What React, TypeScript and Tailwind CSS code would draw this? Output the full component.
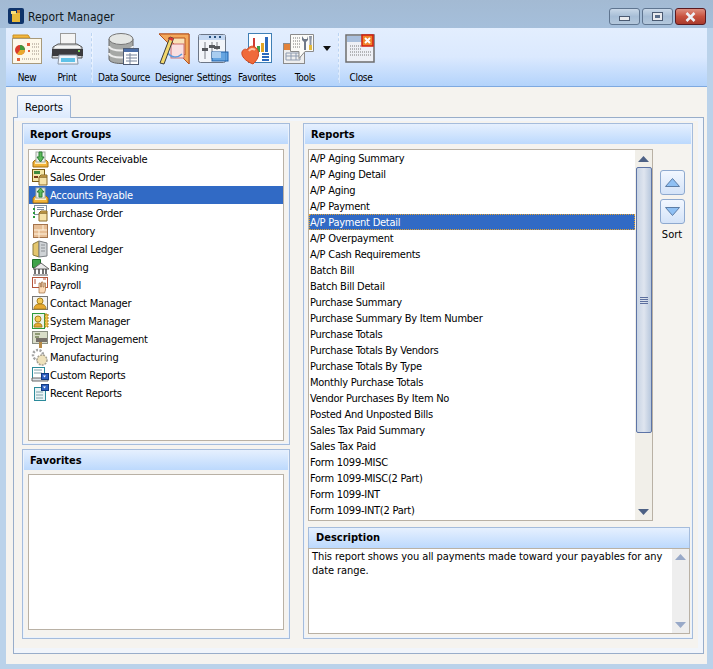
import type { ReactNode } from "react";

const font = { fontFamily: '"DejaVu Sans", Tahoma, sans-serif' };

const groups = [
  "Accounts Receivable",
  "Sales Order",
  "Accounts Payable",
  "Purchase Order",
  "Inventory",
  "General Ledger",
  "Banking",
  "Payroll",
  "Contact Manager",
  "System Manager",
  "Project Management",
  "Manufacturing",
  "Custom Reports",
  "Recent Reports",
];

const reports = [
  "A/P Aging Summary",
  "A/P Aging Detail",
  "A/P Aging",
  "A/P Payment",
  "A/P Payment Detail",
  "A/P Overpayment",
  "A/P Cash Requirements",
  "Batch Bill",
  "Batch Bill Detail",
  "Purchase Summary",
  "Purchase Summary By Item Number",
  "Purchase Totals",
  "Purchase Totals By Vendors",
  "Purchase Totals By Type",
  "Monthly Purchase Totals",
  "Vendor Purchases By Item No",
  "Posted And Unposted Bills",
  "Sales Tax Paid Summary",
  "Sales Tax Paid",
  "Form 1099-MISC",
  "Form 1099-MISC(2 Part)",
  "Form 1099-INT",
  "Form 1099-INT(2 Part)",
];

const Ico = ({ size, children }: { size: number; children: ReactNode }) => (
  <svg width={size} height={size} viewBox={`0 0 ${size} ${size}`} className="shrink-0">
    {children}
  </svg>
);

// ---- toolbar icons, 32px box
const NewIcon = () => (
  <Ico size={32}>
    <path d="M2 2h15l2 3h-17z" fill="#f3b73f" stroke="#c98f22" />
    <rect x="1.500" y="5.500" width="29" height="25" fill="#fdf8ea" stroke="#a89a7c" />
    <circle cx="9" cy="17" r="5" fill="#d93a2b" />
    <path d="M9 17v-5a5 5 0 0 1 5 5z" fill="#3d9a3e" />
    <path d="M9 17h5a5 5 0 0 1-8 4z" fill="#e8a92c" />
    <path d="M16 10h3v3h-3zM17 17h2v2h-2zM6 25h3v3H6z" fill="#e2603a" />
    <path d="M21 11h7M21 14h7M21 18h7M21 21h7M11 26h17" stroke="#9a8d80" strokeDasharray="1 1" />
  </Ico>
);
const PrintIcon = () => (
  <Ico size={32}>
    <rect x="9.500" y="0.500" width="15" height="12" fill="#f4f4f4" stroke="#9a9a9a" />
    <path d="M2 14 7 11h19l5 3v11H1z" fill="#d2d4d6" stroke="#555" />
    <rect x="1" y="16" width="31" height="7" fill="#3a3a3e" />
    <rect x="4" y="13" width="25" height="2" fill="#f5f5f5" />
    <rect x="27" y="17" width="2" height="2" fill="#7ed957" />
    <path d="M8 22h18l1 9H7z" fill="#eef4fb" stroke="#8d97a5" />
    <path d="M10 25h14v4H10z" fill="#5fc2e8" />
  </Ico>
);
const DataIcon = () => (
  <Ico size={32}>
    <path d="M1 6v20c0 6 24 6 24 0V6z" fill="#a6a8a6" stroke="#666" />
    <ellipse cx="13" cy="6" rx="12" ry="5.500" fill="#e4e6e4" stroke="#777" />
    <path d="M1 13c0 6 24 6 24 0M1 20c0 6 24 6 24 0" fill="none" stroke="#eeeeee" strokeWidth="2" />
    <rect x="15.500" y="15.500" width="15" height="16" fill="#fff" stroke="#4d5b75" />
    <rect x="16" y="16" width="14" height="3" fill="#4d6fa8" />
    <path d="M18 22h11M18 25h11M18 28h11M22 20v11" stroke="#77839a" />
  </Ico>
);
const DesignerIcon = () => (
  <Ico size={32}>
    <path d="M1 1h30v30z" fill="#f9e2b8" stroke="#b6521f" />
    <path d="M1 1h30v30zM10 5l17 17V5z" fill="#f3a85c" fillRule="evenodd" stroke="#b6521f" />
    <rect x="13" y="11" width="13" height="14" fill="#f9dfe0" stroke="#cf6e6e" />
    <path d="M10 20c3 5 10 5 14 1" fill="none" stroke="#5c9be0" strokeWidth="1.500" />
    <path d="M2 30 12 4l3.500 1.500L6 31z" fill="#f2d86d" stroke="#3c3c3c" />
    <path d="M12 4l3.500 1.500-1 2.500L11 6.500z" fill="#d33" />
  </Ico>
);
const SettingsIcon = () => (
  <Ico size={32}>
    <rect x="0.500" y="1.500" width="27" height="28" rx="2" fill="#f2f5fa" stroke="#6c7686" />
    <rect x="1" y="2" width="26" height="5" fill="#c4d8f2" />
    <path d="M11 3h2v2h-2zM16 3h2v2h-2zM21 3h2v2h-2z" fill="#28527f" />
    <path d="M7 9v17M14 9v17M19 9v8" stroke="#7a7f86" />
    <path d="M4 15h6v3H4zM11 12h6v3h-6zM16 13h6v3h-6z" fill="#55585e" />
    <rect x="14" y="19" width="16" height="9" fill="#4e97dc" fillOpacity="0.85" stroke="#1d5fa8" />
    <rect x="14" y="19" width="9" height="6" fill="#a9cdf0" />
  </Ico>
);
const FavIcon = () => (
  <Ico size={32}>
    <rect x="7.500" y="0.500" width="23" height="29" fill="#fff" stroke="#3f7fb5" />
    <path d="M12 5h2v14h-2z" fill="#cf3a34" />
    <path d="M16 13h3v6h-3z" fill="#3aa04a" />
    <path d="M20 10h3v9h-3z" fill="#e3a524" />
    <path d="M24 4h3v15h-3z" fill="#2c68bc" />
    <path d="M21 21h7M21 24h7M21 27h7" stroke="#2c68bc" strokeWidth="2" />
    <path d="M12 31C4 28 0 23 1 19c1-3 4-3.500 5-2 1-3 5-5 8-3 4 2 4 8 3 10-1 3-3 5-5 7z" fill="#ef6a3a" stroke="#d1481f" />
    <path d="M8 18c1-2 4-3 6-1" fill="none" stroke="#fbc3a4" strokeWidth="2" />
  </Ico>
);
const ToolsIcon = () => (
  <Ico size={32}>
    <rect x="0.500" y="10.500" width="21" height="20" fill="#eeeeee" stroke="#8b8b8b" />
    <rect x="1" y="11" width="8" height="6" fill="#e2823a" />
    <path d="M3 20h14v7H3zM8 20v7M13 20v7M3 23h14" fill="none" stroke="#8e9bb0" />
    <path d="M7.500 1.500h23v17H22l-6 7v-7H7.500z" fill="#fbfbf8" stroke="#8b8b8b" />
    <path d="M10 5h7M10 8h7M10 11h7M10 14h7" stroke="#777" strokeDasharray="1 1" />
    <path d="M19 3v4l2 2v8h2V9l2-2V3l-1 3h-3z" fill="#6f7888" />
    <path d="M26 3h3l-.5 5v5h-2V8z" fill="#8d96a6" />
    <rect x="26" y="12" width="3" height="5" fill="#e3b93b" />
  </Ico>
);
const CloseIcon = () => (
  <Ico size={32}>
    <rect x="1" y="2" width="28" height="27" fill="#eef0f6" stroke="#6d6d6d" strokeWidth="1.500" />
    <rect x="2" y="3" width="26" height="6" fill="#a9bfdc" />
    <path d="M5 13h11M5 16h11M5 19h21M5 22h21" stroke="#777" strokeDasharray="1 1" />
    <rect x="17" y="2" width="11" height="11" fill="#f0852a" stroke="#d21f10" strokeWidth="1.500" />
    <path d="m20 5 5 5m0-5-5 5" stroke="#fff" strokeWidth="2" />
  </Ico>
);

// ---- list icons, 18px box, keyed by row
const Box = () => (
  <>
    <path d="M8 9h8v8H8z" fill="#f6e2a8" stroke="#8a6b2a" />
    <path d="M8 9l2-2h6v2z" fill="#e2b658" stroke="#8a6b2a" />
  </>
);
const Tray = ({ up }: { up?: boolean }) => (
  <>
    <path d="M2 12 4 10h11l2 2v5H2z" fill="#f2b43a" stroke="#a36f12" />
    <path d="M4 12h11v2H4z" fill="#fff1c4" />
    <rect x="5" y="2" width="9" height="10" fill="#eef2ee" stroke="#a3aaa3" />
    {up ? (
      <path d="M9.500 2 13 6h-2v5H8V6H6z" fill="#5cbb5a" stroke="#2c7c37" />
    ) : (
      <path d="M8 2h3v5h2l-3.500 5L6 7h2z" fill="#5cbb5a" stroke="#2c7c37" />
    )}
  </>
);
const listIcons: ReactNode[] = [
  <Tray key="ar" />,
  <g key="so">
    <rect x="1.500" y="1.500" width="12" height="12" fill="#f3e5a8" stroke="#7a5a14" />
    <path d="M3 3h6v3H3z" fill="#3d8a3d" />
    <path d="M3 8h4v2H3z" fill="#7a3b1a" />
    <Box />
  </g>,
  <Tray key="ap" up />,
  <g key="po">
    <rect x="3.500" y="1.500" width="12" height="9" fill="#fff" stroke="#7d8ea3" />
    <path d="M6 3.500h7M6 5.500h7" stroke="#7d8ea3" />
    <path d="M3 4v11" stroke="#2b9a3b" strokeWidth="2" strokeDasharray="2 2" />
    <Box />
  </g>,
  <g key="inv">
    <rect x="2.500" y="2.500" width="14" height="13" fill="#e7bf97" stroke="#a5744c" />
    <path d="M3 8h13M3 12h13M8 8v8M12 3v5" stroke="#fff2dd" />
  </g>,
  <g key="gl">
    <path d="M2 4 8 1v16l-6-2z" fill="#e4c66d" stroke="#8c7a3c" />
    <path d="M8 1l8 2v13l-8 1z" fill="#cfd3d6" stroke="#7b7f84" />
    <path d="M10 5h4M10 8h4M10 11h4" stroke="#8d9196" />
  </g>,
  <g key="bank">
    <path d="M1.500 1.500h8v8h-8z" fill="#3fa34a" stroke="#1e6f2a" />
    <path d="M2 11 10 5l8 6z" fill="#e8e8e8" stroke="#666" />
    <path d="M4 11v5M8 11v5M12 11v5M15 11v5" stroke="#444" strokeWidth="1.500" />
    <path d="M2 17h15" stroke="#555" />
  </g>,
  <g key="pay">
    <rect x="1.500" y="1.500" width="15" height="10" fill="#fff" stroke="#b4553a" />
    <path d="M4 3v5M12 3h3" stroke="#b4553a" />
    <path d="M8 17V7h1.500v4h1V6h1.500v5h1V7h1.500v7l-1 3z" fill="#fbd9b5" stroke="#9c6a3c" strokeWidth=".7" />
  </g>,
  <g key="cm">
    <rect x="1.500" y="2.500" width="15" height="13" fill="#f3f3f0" stroke="#777" />
    <circle cx="9" cy="7" r="3" fill="#f4cb57" stroke="#a8801c" />
    <path d="M3 15c0-4 3-5 6-5s6 1 6 5z" fill="#e7a92f" stroke="#a8801c" />
  </g>,
  <g key="sm">
    <rect x="1.500" y="1.500" width="12" height="15" fill="#eaf3ea" stroke="#2e9a3c" />
    <circle cx="7" cy="7" r="3" fill="#f4cb57" stroke="#a8801c" />
    <path d="M3 15c0-3 2-4 4-4s4 1 4 4z" fill="#e7a92f" stroke="#a8801c" />
    <path d="M14 2h3v13h-3z" fill="#f0c24c" stroke="#a8801c" strokeDasharray="2 1" />
  </g>,
  <g key="pm">
    <rect x="1.500" y="1.500" width="15" height="12" fill="#d9ddc9" stroke="#8b8f83" />
    <path d="M4 4h5M4 7h4" stroke="#8f9a74" strokeWidth="2" />
    <path d="M5 8h11v4H5z" fill="#77706a" />
    <path d="M8 12h3v6H8z" fill="#b88c48" />
  </g>,
  <g key="mf">
    <circle cx="7" cy="7" r="5" fill="none" stroke="#a3a3a3" strokeWidth="2.500" strokeDasharray="2 1.500" />
    <circle cx="11" cy="12" r="5" fill="#efe2bc" stroke="#a6a090" strokeWidth="1.500" strokeDasharray="2 1" />
  </g>,
  <g key="cr">
    <rect x="1.500" y="1.500" width="12" height="11" fill="#fff" stroke="#2b8a9a" />
    <path d="M3 4h8M3 7h8" stroke="#7fa0a8" />
    <path d="M1 12h16v3H1z" fill="#dfe3e8" stroke="#666" />
    <rect x="10.500" y="7.500" width="7" height="6" fill="#2b5fc0" stroke="#123a80" />
    <path d="m12 9.500 3 0-1.500 2z" fill="#fff" />
  </g>,
  <g key="rr">
    <rect x="3.500" y="3.500" width="11" height="13" fill="#e8f3f5" stroke="#2b8a9a" />
    <path d="M5 8h7M5 11h7M5 14h7" stroke="#7fa0a8" />
    <rect x="10.500" y="0.500" width="7" height="6" fill="#2b5fc0" stroke="#123a80" />
    <path d="m12 2.500 3 0-1.500 2z" fill="#fff" />
  </g>,
];

const ToolButton = ({ label, icon, w }: { label: string; icon: ReactNode; w: string }) => (
  <div className={`flex flex-col items-center ${w}`}>
    <div className="h-[33px] flex items-center justify-center">{icon}</div>
    <span className="mt-[7px] text-[10px] leading-[12px] whitespace-nowrap tracking-[-0.3px]">{label}</span>
  </div>
);

const Sep = () => (
  <div className="w-[2px] h-[50px] mt-[1px] mx-[3px] shrink-0 border-l border-dashed border-[#bcd4f2] bg-white/40" />
);

const WinButton = ({ children, red }: { children: ReactNode; red?: boolean }) => (
  <div
    className={`w-[31px] h-[17px] rounded-[3px] border flex items-center justify-center ${
      red
        ? "border-[#5a1a20] bg-gradient-to-b from-[#dd8f80] via-[#c8523f] to-[#a93a2c]"
        : "border-[#5f7590] bg-gradient-to-b from-[#c9d8e8] via-[#a6bdd6] to-[#b4c8dc]"
    }`}
  >
    {children}
  </div>
);

const Panel = ({ title, className, children }: { title: string; className: string; children: ReactNode }) => (
  <div className={`border border-[#a5bcdc] bg-[#eaf2fd] px-[1px] pb-[1px] flex flex-col ${className}`}>
    <div className="h-[20px] shrink-0 pl-[6px] pt-[2px] flex items-center bg-gradient-to-b from-[#e6f0fe] to-[#bcd9fd] text-[11px] font-bold">
      {title}
    </div>
    <div className="flex-1 min-h-0 bg-[#f5f3ef] flex flex-col">{children}</div>
  </div>
);

const Tri = ({ down, color }: { down?: boolean; color: string }) => (
  <svg width="11" height="6" viewBox="0 0 11 6">
    <path d={down ? "M0 0h11L5.500 6z" : "M5.500 0 11 6H0z"} fill={color} />
  </svg>
);

const SortButton = ({ down }: { down?: boolean }) => (
  <div className="w-[25px] h-[25px] rounded-[3px] border border-[#8ea9cf] bg-gradient-to-b from-[#f2f7ff] to-[#d4e3f8] flex items-center justify-center">
    <svg width="15" height="9" viewBox="0 0 15 9">
      <path
        d={down ? "M.5.5h14L7.500 8.500z" : "M7.500 .5 14.500 8.500H.5z"}
        fill="#8fc0f4"
        stroke="#5c7da6"
      />
    </svg>
  </div>
);

const ReportScrollbar = () => (
  <div className="w-[17px] shrink-0 bg-[#f1efe9] flex flex-col items-center">
    <div className="h-[17px] flex items-center justify-center">
      <Tri color="#4d6185" />
    </div>
    <div className="w-[16px] h-[266px] rounded-[2px] border border-[#5d74a6] bg-gradient-to-r from-[#c8d4e4] via-[#dfe5ef] to-[#b8c8dd] flex flex-col items-center justify-center gap-[1px]">
      <div className="w-[8px] h-[1px] bg-[#5c6f9e]" />
      <div className="w-[8px] h-[1px] bg-[#5c6f9e]" />
      <div className="w-[8px] h-[1px] bg-[#5c6f9e]" />
      <div className="w-[8px] h-[1px] bg-[#5c6f9e]" />
    </div>
    <div className="flex-1" />
    <div className="h-[17px] flex items-center justify-center">
      <Tri down color="#4d6185" />
    </div>
  </div>
);

export default function App() {
  return (
    <div
      className="w-[713px] h-[669px] overflow-hidden bg-[#bad2ea] flex flex-col text-black [font-stretch:condensed]"
      style={font}
    >
      {/* title bar */}
      <div className="h-[28px] shrink-0 bg-gradient-to-b from-[#a3bad3] to-[#a5bfdb] flex items-start pt-[8px] pl-[8px] pr-[7px]">
        <svg width="16" height="16" viewBox="0 0 16 16">
          <rect width="16" height="16" rx="2" fill="#10346a" />
          <path d="M4 5h8v9H4z" fill="#e8b93a" />
          <path d="M3 3h5v3H3z" fill="#f8de7a" />
          <path d="M9 2h3v3H9z" fill="#d0822c" />
        </svg>
        <span className="ml-[4px] mt-[2px] text-[12px] leading-[14px] text-[#101820]">Report Manager</span>
        <div className="ml-auto flex gap-[2px]">
          <WinButton>
            <div className="w-[11px] h-[5px] mt-[3px] bg-[#e8eaee] border border-[#4a5a72]" />
          </WinButton>
          <WinButton>
            <div className="w-[11px] h-[9px] bg-[#e8eaee] border border-[#4a5a72] flex items-center justify-center">
              <div className="w-[5px] h-[3px] bg-[#5a6d8a]" />
            </div>
          </WinButton>
          <WinButton red>
            <svg width="11" height="10" viewBox="0 0 11 10">
              <path d="m1.500 1 8 8m0-8-8 8" stroke="#eef2f8" strokeWidth="2.500" />
            </svg>
          </WinButton>
        </div>
      </div>

      {/* client area */}
      <div className="flex-1 min-h-0 mx-[6px] mb-[5px] bg-[#f5f3ef] flex flex-col">
        <div className="h-[59px] shrink-0 flex items-start pt-[4px] pl-[2px] bg-gradient-to-b from-[#e3eefe] via-[#dbe9fe] to-[#b3d3fb] border-b border-[#7ea9e0]">
          <ToolButton label="New" icon={<NewIcon />} w="w-[38px]" />
          <ToolButton label="Print" icon={<PrintIcon />} w="w-[42px]" />
          <Sep />
          <ToolButton label="Data Source" icon={<DataIcon />} w="w-[56px]" />
          <ToolButton label="Designer" icon={<DesignerIcon />} w="w-[44px]" />
          <ToolButton label="Settings" icon={<SettingsIcon />} w="w-[36px]" />
          <ToolButton label="Favorites" icon={<FavIcon />} w="w-[50px]" />
          <div className="flex flex-col items-center w-[53px]">
            <div className="h-[33px] w-full flex items-center gap-[8px] pl-[1px]">
              <ToolsIcon />
              <svg width="8" height="5" viewBox="0 0 8 5" className="shrink-0">
                <path d="M0 0h8L4 5z" fill="#111" />
              </svg>
            </div>
            <span className="mt-[7px] text-[10px] leading-[12px] pr-[7px] tracking-[-0.3px]">Tools</span>
          </div>
          <Sep />
          <ToolButton label="Close" icon={<CloseIcon />} w="w-[36px]" />
        </div>

        {/* tab strip + pane */}
        <div className="flex-1 min-h-0 px-[7px] pt-[8px] flex flex-col">
          <div className="pl-[4px] flex shrink-0">
            <div className="w-[54px] h-[23px] -mb-[1px] pt-[3px] relative z-10 border border-b-0 border-[#9db5d6] rounded-t-[2px] bg-gradient-to-b from-[#f6f9ff] to-[#dceafd] flex items-center justify-center text-[11px]">
              Reports
            </div>
          </div>
          <div className="w-[691px] h-[537px] border border-[#98adca] bg-[#f1f5fb] pt-[3px] pr-[5px] pb-[5px] flex">
            <div className="flex-1 min-w-0 bg-[#f5f3ef] pl-[8px] pt-[2px] pb-[9px] flex gap-[13px]">
              <div className="w-[268px] shrink-0 flex flex-col gap-[4px]">
                <Panel title="Report Groups" className="h-[322px]">
                  <div className="mx-[4px] mt-[5px] h-[292px] border border-[#b9b1a5] bg-white">
                    {groups.map((g, i) => (
                      <div
                        key={g}
                        className={`h-[18px] flex items-center text-[11px] tracking-[-0.25px] ${
                          i === 2 ? "bg-[#316ac5] text-white" : ""
                        }`}
                      >
                        <span className="ml-[2px] w-[18px] h-[18px] shrink-0">
                          <Ico size={18}>{listIcons[i]}</Ico>
                        </span>
                        <span className="ml-[1px] pt-[2px] whitespace-nowrap">{g}</span>
                      </div>
                    ))}
                  </div>
                </Panel>
                <Panel title="Favorites" className="flex-1 min-h-0">
                  <div className="mx-[4px] mt-[4px] h-[156px] border border-[#b9b1a5] bg-white" />
                </Panel>
              </div>

              <Panel title="Reports" className="w-[390px] shrink-0">
                <div className="flex pt-[5px] pl-[3px]">
                  <div className="w-[345px] h-[372px] shrink-0 border border-[#b9b1a5] bg-white flex">
                    <div className="flex-1 min-w-0 overflow-hidden">
                      {reports.map((r, i) => (
                        <div
                          key={r}
                          className={`h-[16px] pl-[1px] pt-[2px] flex items-center text-[11px] whitespace-nowrap tracking-[-0.25px] ${
                            i === 4
                              ? "bg-[#316ac5] text-white outline-1 -outline-offset-1 outline-dotted outline-[#e0a030]"
                              : ""
                          }`}
                        >
                          {r}
                        </div>
                      ))}
                    </div>
                    <ReportScrollbar />
                  </div>
                  <div className="ml-[7px] pt-[21px] flex flex-col items-center gap-[4px]">
                    <SortButton />
                    <SortButton down />
                    <span className="pr-[1px] text-[11px] leading-[14px]">Sort</span>
                  </div>
                </div>
                <div className="mt-[6px] ml-[3px] mr-[1px] flex flex-col">
                  <div className="h-[21px] pl-[7px] flex items-center border border-b-0 border-[#a5bcdc] bg-gradient-to-b from-[#e6f0fe] to-[#bcd9fd] text-[11px] font-bold">
                    Description
                  </div>
                  <div className="h-[86px] bg-white border border-[#b9b1a5] flex">
                    <p className="flex-1 pl-[3px] pt-[1px] pr-[4px] text-[11px] leading-[14px] tracking-[-0.08px]">
                      This report shows you all payments made toward your payables for any date range.
                    </p>
                    <div className="w-[17px] shrink-0 bg-[#eeeeee] flex flex-col items-center justify-between py-[5px]">
                      <Tri color="#98a9c8" />
                      <Tri down color="#98a9c8" />
                    </div>
                  </div>
                </div>
              </Panel>
            </div>
          </div>
        </div>
      </div>
    </div>
  );
}
